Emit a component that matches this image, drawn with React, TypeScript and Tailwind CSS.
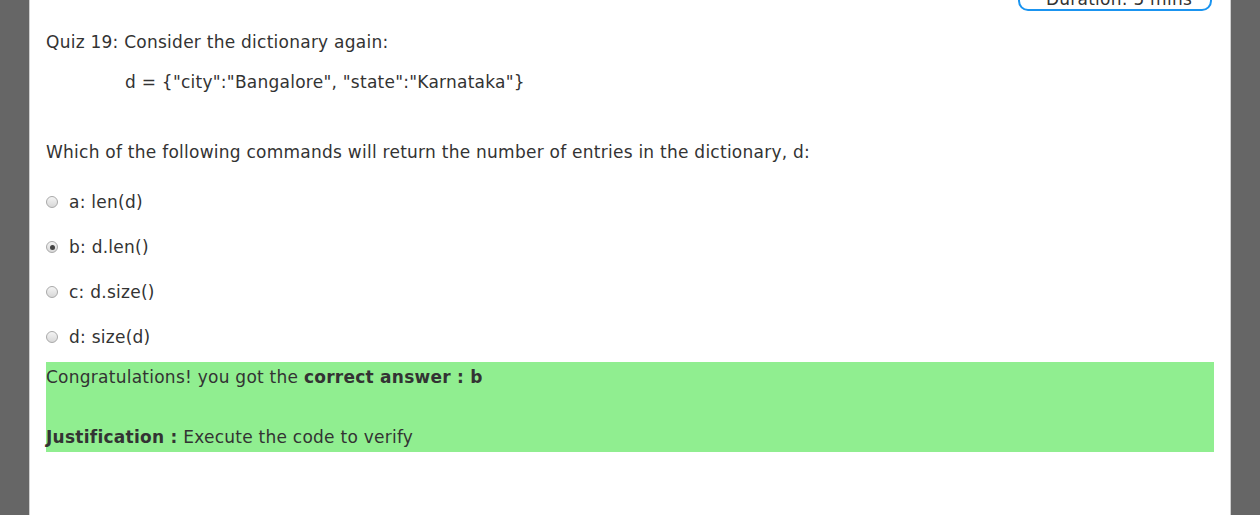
const options = [
  { key: 'a', label: 'a: len(d)', checked: false },
  { key: 'b', label: 'b: d.len()', checked: true },
  { key: 'c', label: 'c: d.size()', checked: false },
  { key: 'd', label: 'd: size(d)', checked: false },
];

function Radio({ checked }: { checked: boolean }) {
  return (
    <span className="flex h-[12px] w-[12px] shrink-0 items-center justify-center rounded-full border border-[#a9a9a9] bg-gradient-to-b from-[#f4f4f4] to-[#d8d8d8]">
      {checked && <span className="h-[5px] w-[5px] rounded-full bg-[#444]" />}
    </span>
  );
}

export default function App() {
  return (
    <div className="h-[515px] overflow-hidden bg-[#666666] font-['DejaVu_Sans',Verdana,sans-serif] text-[17px] tracking-[0.25px] text-[#333333]">
      <div className="ml-[29px] h-full w-[1202px] border-x border-[#cfcfcf] bg-white px-4">
        <div className="flex justify-end pr-[2px]">
          <div className="-mt-[25px] flex h-[36px] w-[194px] items-end justify-center rounded-[10px] border-2 border-[#1a94f0] pl-[8px] leading-[20px]">
            Duration: 5 mins
          </div>
        </div>

        <p className="mt-[21px] leading-[20px]">Quiz 19: Consider the dictionary again:</p>
        <p className="mt-[20px] pl-[79px] leading-[20px]">
          d = {'{'}"city":"Bangalore", "state":"Karnataka"{'}'}
        </p>

        <p className="mt-[50px] leading-[20px]">
          Which of the following commands will return the number of entries in the dictionary, d:
        </p>

        <div className="mt-[30px] flex flex-col gap-[25px]">
          {options.map((o) => (
            <label key={o.key} className="flex h-[20px] items-center gap-[11px]">
              <Radio checked={o.checked} />
              <span className="leading-[20px]">{o.label}</span>
            </label>
          ))}
        </div>

        <div className="mt-[15px] h-[90px] bg-[#90ee90] pt-[5px] leading-[20px]">
          <p>
            Congratulations! you got the <b>correct answer : b</b>
          </p>
          <p className="mt-[40px]">
            <b>Justification :</b> Execute the code to verify
          </p>
        </div>
      </div>
    </div>
  );
}
